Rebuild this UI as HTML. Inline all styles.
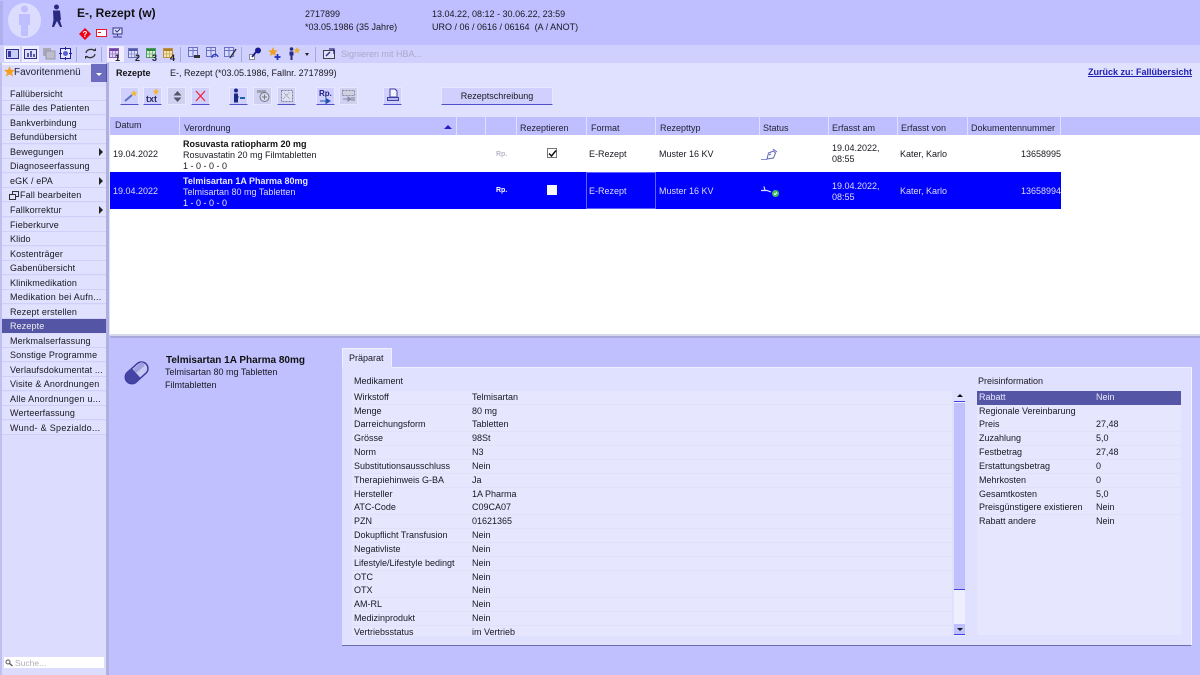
<!DOCTYPE html>
<html><head><meta charset="utf-8"><style>
*{box-sizing:border-box}
html,body{margin:0;padding:0;width:1200px;height:675px;overflow:hidden;background:#c0c0ff;font-family:"Liberation Sans",sans-serif;font-size:9px;color:#181820;}
.a,.t,svg.i{position:absolute}
.t{white-space:nowrap;line-height:12px}
.m{position:absolute;left:2px;width:104px;height:14px;background:#e0e0ff;line-height:14px;padding-left:8px;font-size:9px;letter-spacing:.12px;white-space:nowrap;border-bottom:1px solid #cfcff8}
.ar{position:absolute;right:3px;top:3px;width:0;height:0;border-left:4px solid #222;border-top:4px solid transparent;border-bottom:4px solid transparent}
.btn{position:absolute;top:87px;width:19px;height:18px;background:#d0d0ff;border:1px solid #e8e8ff;border-bottom:1px solid #5050c8}
.btn.d{border-bottom:1px solid #e8e8ff;background:#d0d0f0}
.sep{position:absolute;top:117px;width:1px;height:18px;background:#e0e0ff}
.h{position:absolute;top:122px;line-height:12px;color:#223;white-space:nowrap}
.r{position:absolute;left:352px;width:600px;height:14px;background:#e6e6ff;border-bottom:1px solid #e0e0f8;line-height:15px}
.r span{position:absolute;top:-1px;white-space:nowrap}
.p{position:absolute;left:977px;width:204px;height:14px;background:#e6e6ff;border-bottom:1px solid #e0e0f8;line-height:15px}
.p span{position:absolute;top:-1px;white-space:nowrap}
.ts{position:absolute;top:47px;width:1px;height:15px;background:#a8a8e0}
.tb{position:absolute;top:46px;width:15px;height:15px}
.dg{position:absolute;top:53px;font-size:9px;font-weight:bold;line-height:10px;color:#222}
</style></head><body>

<!-- header -->
<div class="a" style="left:0;top:0;width:1200px;height:45px;background:#bfbfff"></div>
<div class="a" style="left:0;top:1px;width:3px;height:44px;background:#b0b0ef"></div>
<div class="a" style="left:8px;top:3px;width:33px;height:35px;border-radius:50%;background:#dcdcff"></div>
<svg class="i" style="left:8px;top:3px" width="33" height="35"><circle cx="16.500" cy="6" r="3.500" fill="#bfbfff"/><path d="M11 11h11v11h-2v11h-7V22h-2z" fill="#bfbfff"/></svg>
<svg class="i" style="left:50px;top:4px" width="14" height="24"><circle cx="6.500" cy="3" r="2.500" fill="#2a2a80"/><path d="M3 6.500h7l1 9-1 1 2 6.500h-2L7 17l-3 6H2l1.500-7z" fill="#2a2a80"/></svg>
<div class="t" style="left:77px;top:6px;font-size:12px;font-weight:bold;line-height:14px;color:#111;">E-, Rezept (w)</div>
<svg class="i" style="left:79px;top:28px" width="14" height="12"><path d="M6 0l6 6-6 6-6-6z" fill="#f00010"/><text x="6" y="9" font-size="8" font-weight="bold" fill="#fff" text-anchor="middle" font-family="Liberation Sans">?</text></svg>
<svg class="i" style="left:96px;top:29px" width="12" height="10"><rect x=".5" y=".5" width="10" height="7" fill="#fff" stroke="#e81828"/><rect x="2" y="3" width="3" height="1" fill="#e81828"/></svg>
<svg class="i" style="left:112px;top:27px" width="12" height="12"><rect x="1" y="1" width="9" height="6" fill="#e6e6ff" stroke="#30308a"/><path d="M3 3l2 2 3-3" stroke="#30308a" fill="none"/><path d="M5.500 7v2M1 10h9" stroke="#30308a"/></svg>
<div class="t" style="left:305px;top:8px">2717899</div>
<div class="t" style="left:305px;top:21px">*03.05.1986 (35 Jahre)</div>
<div class="t" style="left:432px;top:8px">13.04.22, 08:12 - 30.06.22, 23:59</div>
<div class="t" style="left:432px;top:21px">URO / 06 / 0616 / 06164&nbsp; (A / ANOT)</div>

<!-- toolbar -->
<div class="a" style="left:0;top:45px;width:1200px;height:18px;background:#d0d0ff"></div>
<div class="a" style="left:4px;top:46px;width:16px;height:16px;background:#eeeeff"></div>
<svg class="tb" style="left:5px"><rect x="1.500" y="3.500" width="12" height="9" fill="#c8d0f8" stroke="#303090"/><rect x="3" y="5" width="3" height="6" fill="#3838a0"/></svg>
<div class="a" style="left:22px;top:46px;width:17px;height:16px;background:#eeeeff"></div>
<svg class="tb" style="left:23px"><rect x="1.500" y="3.500" width="12" height="9" fill="#e0e0ff" stroke="#303090"/><path d="M5 7v4M8 5v6M11 8v3" stroke="#303090" stroke-width="1.500"/></svg>
<svg class="tb" style="left:41px"><rect x="2" y="2" width="8" height="8" fill="#a8a8b8"/><rect x="5" y="5" width="9" height="8" fill="#bcbccc" stroke="#9898a8"/></svg>
<svg class="tb" style="left:58px"><rect x="2.500" y="2.500" width="10" height="10" fill="#e8e8ff" stroke="#2020a0"/><circle cx="7.500" cy="7.500" r="2.500" fill="#5860d0"/><path d="M7.500 1v3M7.500 11v3M1 7.500h3M11 7.500h3" stroke="#2020a0"/></svg>
<div class="ts" style="left:76px"></div>
<svg class="tb" style="left:83px"><path d="M3 7a5 4 0 0 1 9-2M12 8a5 4 0 0 1-9 2" fill="none" stroke="#333" stroke-width="1.200"/><path d="M10 5h3V2z M5 10H2v3z" fill="#333"/></svg>
<div class="ts" style="left:101px"></div>
<div class="a" style="left:107px;top:46px;width:17px;height:16px;background:#eeeeff"></div>
<svg class="tb" style="left:109px"><rect x=".5" y="2.500" width="9" height="9" fill="#e0d4f4" stroke="#7040a8" stroke-opacity=".8"/><rect x="1" y="3" width="8" height="2" fill="#7040a8"/><path d="M.5 8h9M3.500 5v6M6.500 5v6" stroke="#7040a8" stroke-opacity=".5"/></svg><div class="dg" style="left:115px">1</div>
<svg class="tb" style="left:128px"><rect x=".5" y="2.500" width="9" height="9" fill="#dcdffa" stroke="#5058a8" stroke-opacity=".8"/><rect x="1" y="3" width="8" height="2" fill="#5058a8"/><path d="M.5 8h9M3.500 5v6M6.500 5v6" stroke="#5058a8" stroke-opacity=".5"/></svg><div class="dg" style="left:135px">2</div>
<svg class="tb" style="left:146px"><rect x=".5" y="2.500" width="9" height="9" fill="#d4eed4" stroke="#308840" stroke-opacity=".8"/><rect x="1" y="3" width="8" height="2" fill="#308840"/><path d="M.5 8h9M3.500 5v6M6.500 5v6" stroke="#308840" stroke-opacity=".5"/></svg><div class="dg" style="left:152px">3</div>
<svg class="tb" style="left:163px"><rect x=".5" y="2.500" width="9" height="9" fill="#f4e4b0" stroke="#b08020" stroke-opacity=".8"/><rect x="1" y="3" width="8" height="2" fill="#b08020"/><path d="M.5 8h9M3.500 5v6M6.500 5v6" stroke="#b08020" stroke-opacity=".5"/></svg><div class="dg" style="left:170px">4</div>
<div class="ts" style="left:180px"></div>
<svg class="tb" style="left:187px"><rect x="1.500" y="1.500" width="9" height="9" fill="#d8dcfc" stroke="#6870c8"/><path d="M1.500 4.500h9M6 1.500v9" stroke="#6870c8"/><rect x="7" y="9" width="6" height="3" fill="#333"/></svg>
<svg class="tb" style="left:205px"><rect x="1.500" y="1.500" width="9" height="9" fill="#d8dcfc" stroke="#6870c8"/><path d="M1.500 4.500h9M6 1.500v9" stroke="#6870c8"/><path d="M7 12a3 3 0 1 1 6-1" fill="none" stroke="#2030c0" stroke-width="1.300"/></svg>
<svg class="tb" style="left:223px"><rect x="1.500" y="1.500" width="9" height="9" fill="#d8dcfc" stroke="#6870c8"/><path d="M1.500 4.500h9M6 1.500v9" stroke="#6870c8"/><path d="M13 3L7 12" stroke="#333" stroke-width="1.500"/></svg>
<div class="ts" style="left:241px"></div>
<svg class="tb" style="left:248px"><rect x="1.500" y="8.500" width="5" height="5" fill="#fff" stroke="#888"/><circle cx="10" cy="4.500" r="3" fill="#1a1a90"/><path d="M8 6L4 11" stroke="#1a1a90" stroke-width="1.800"/></svg>
<svg class="tb" style="left:267px"><path d="M6 1l1.400 3.200 3.400.3-2.600 2.200.8 3.300L6 8.200 3 10l.8-3.300L1.200 4.500l3.400-.3z" fill="#f0a020"/><path d="M10.500 8v6M7.500 11h6" stroke="#2030c0" stroke-width="1.800"/></svg>
<svg class="tb" style="left:287px"><circle cx="4.500" cy="3" r="1.800" fill="#2a2a80"/><path d="M2.500 5.500h4v4h-1v4.500h-2V9.500h-1z" fill="#2a2a80"/><path d="M10 1l1 2.300 2.500.2-1.900 1.600.6 2.400-2.200-1.300-2.200 1.300.6-2.400L6.500 3.500 9 3.300z" fill="#e8b030"/></svg>
<div class="a" style="left:305px;top:53px;width:0;height:0;border-left:2.500px solid transparent;border-right:2.500px solid transparent;border-top:3px solid #222"></div>
<div class="ts" style="left:315px"></div>
<svg class="tb" style="left:322px"><rect x="1.500" y="4.500" width="11" height="8" fill="#e0e0ff" stroke="#444"/><path d="M4 10l4-4M7 3h5v5" fill="none" stroke="#2a2a80" stroke-width="1.300"/></svg>
<div class="t" style="left:341px;top:48px;color:#a8a8c8;">Signieren mit HBA...</div>

<!-- sidebar -->
<div class="a" style="left:0;top:63px;width:108px;height:612px;background:#dcdcff"></div>
<div class="a" style="left:0;top:63px;width:2px;height:612px;background:#c0c0f0"></div>
<div class="a" style="left:106px;top:63px;width:3px;height:612px;background:#b0b0e0"></div>
<div class="a" style="left:109px;top:63px;width:1px;height:272px;background:#e0e0ff"></div>
<div class="a" style="left:2px;top:63px;width:89px;height:2px;background:#f4f4ff"></div>
<svg class="i" style="left:4px;top:66px" width="11" height="11"><path d="M5.500 0l1.500 3.700 4 .3-3 2.600 1 3.900-3.500-2.100L2 10.500l1-3.900L0 4l4-.3z" fill="#f5a020"/></svg>
<div class="t" style="left:14px;top:67px;font-size:10px;color:#223;">Favoritenmenü</div>
<div class="a" style="left:91px;top:64px;width:16px;height:18px;background:#6c6cc0;border-right:1px solid #5050a8"></div>
<div class="a" style="left:96px;top:73px;width:0;height:0;border-left:3px solid transparent;border-right:3px solid transparent;border-top:3px solid #fff"></div>

<div class="m" style="top:87px">Fallübersicht</div>
<div class="m" style="top:101px">Fälle des Patienten</div>
<div class="m" style="top:116px">Bankverbindung</div>
<div class="m" style="top:130px">Befundübersicht</div>
<div class="m" style="top:145px">Bewegungen<i class="ar"></i></div>
<div class="m" style="top:159px">Diagnoseerfassung</div>
<div class="m" style="top:174px">eGK / ePA<i class="ar"></i></div>
<div class="m" style="top:188px;padding-left:18px">Fall bearbeiten<svg class="i" style="left:7px;top:3px" width="10" height="9"><rect x="3.500" y=".5" width="6" height="5" fill="none" stroke="#333"/><rect x=".5" y="3.500" width="6" height="5" fill="#e0e0ff" stroke="#333"/></svg></div>
<div class="m" style="top:203px">Fallkorrektur<i class="ar"></i></div>
<div class="m" style="top:218px">Fieberkurve</div>
<div class="m" style="top:232px">Klido</div>
<div class="m" style="top:247px">Kostenträger</div>
<div class="m" style="top:261px">Gabenübersicht</div>
<div class="m" style="top:276px">Klinikmedikation</div>
<div class="m" style="top:290px;letter-spacing:.25px">Medikation bei Aufn...</div>
<div class="m" style="top:305px">Rezept erstellen</div>
<div class="m" style="top:319px;background:#5555a5;color:#eee;border-bottom:0">Rezepte</div>
<div class="m" style="top:334px">Merkmalserfassung</div>
<div class="m" style="top:348px;letter-spacing:.15px">Sonstige Programme</div>
<div class="m" style="top:363px;letter-spacing:.15px">Verlaufsdokumentat ...</div>
<div class="m" style="top:377px;letter-spacing:.15px">Visite &amp; Anordnungen</div>
<div class="m" style="top:392px;letter-spacing:.23px">Alle Anordnungen u...</div>
<div class="m" style="top:406px">Werteerfassung</div>
<div class="m" style="top:421px;letter-spacing:.3px">Wund- &amp; Spezialdo...</div>
<div class="a" style="left:4px;top:657px;width:100px;height:11px;background:#fff"></div>
<svg class="i" style="left:5px;top:659px" width="9" height="8"><circle cx="3" cy="3" r="2" fill="none" stroke="#555"/><path d="M4.500 4.500l3 2.500" stroke="#555" stroke-width="1.300"/></svg>
<div class="t" style="left:15px;top:657px;font-size:8.500px;line-height:12px;color:#b0b0b8;">Suche...</div>

<!-- content top -->
<div class="a" style="left:110px;top:63px;width:1090px;height:54px;background:#e0e0ff"></div>
<div class="t" style="left:116px;top:67px;font-weight:bold;color:#111;">Rezepte</div>
<div class="t" style="left:170px;top:67px">E-, Rezept (*03.05.1986, Fallnr. 2717899)</div>
<div class="t" style="left:1088px;top:66px;font-weight:bold;color:#2020b0;text-decoration:underline;">Zurück zu: Fallübersicht</div>

<div class="btn" style="left:120px"><svg class="i" style="left:1px;top:0" width="16" height="15"><path d="M3 13L10 7" stroke="#6070c0" stroke-width="2"/><path d="M12 2l1 2.300 2.300.2-1.700 1.500.5 2.300-2.100-1.200-2 1.200.5-2.300L8.700 4.500 11 4.300z" fill="#f0b830"/></svg></div>
<div class="btn" style="left:143px"><div class="t" style="left:2px;top:5px;font-size:9px;font-weight:bold;color:#2a2a60;">txt</div><svg class="i" style="left:8px;top:0" width="9" height="8"><path d="M4 0l1 2.500 2.500.2-2 1.600.6 2.500L4 5.500 1.900 6.800l.6-2.500-2-1.600 2.500-.2z" fill="#f0b830"/></svg></div>
<div class="btn d" style="left:167px"><svg class="i" style="left:3px;top:2px" width="13" height="14"><path d="M6.500 1l4 4.500h-8zM6.500 12l4-4.500h-8z" fill="#555568"/></svg></div>
<div class="btn" style="left:191px"><svg class="i" style="left:2px;top:1px" width="13" height="14"><path d="M2 2l9 10M11 2L2 12" stroke="#f02830" stroke-width="1.300"/></svg></div>
<div class="btn" style="left:229px"><svg class="i" style="left:2px;top:0" width="15" height="16"><circle cx="4" cy="2.500" r="2" fill="#1a2880"/><path d="M2 5.500h4v3h1v1H6v5H2z" fill="#1a2880"/><path d="M8 9h5v2H8z" fill="#2060b0"/></svg></div>
<div class="btn d" style="left:253px"><svg class="i" style="left:1px;top:0" width="16" height="16"><rect x="2" y="2" width="9" height="3" fill="#a0a0b0"/><circle cx="9.500" cy="9" r="4.500" fill="#d8d8ee" stroke="#777788"/><path d="M9.500 6.500v5M7 9h5" stroke="#777788"/></svg></div>
<div class="btn" style="left:277px;background:#d0d0f0"><svg class="i" style="left:2px;top:1px" width="14" height="14"><rect x="1.500" y="1.500" width="11" height="11" fill="#e0e0f0" stroke="#8080a8" stroke-dasharray="2 1"/><path d="M3 10l7-7M4 4l6 6" stroke="#9090b0" stroke-dasharray="1 1"/></svg></div>
<div class="btn" style="left:316px"><div class="t" style="left:2px;top:1px;font-size:8px;font-weight:bold;line-height:10px;color:#1a1a80;">Rp.</div><svg class="i" style="left:3px;top:10px" width="13" height="7"><path d="M0 3h8M6 0.500l4 2.500-4 2.500z" fill="#2050b0" stroke="#2050b0"/></svg></div>
<div class="btn d" style="left:339px"><svg class="i" style="left:1px;top:1px" width="15" height="14"><rect x="1.500" y="1.500" width="12" height="5" fill="#d0d0e0" stroke="#8888a0" stroke-dasharray="2 1"/><path d="M2 10h7M7 8l3 2-3 2z" stroke="#8888a0" fill="#8888a0"/><rect x="10" y="8" width="4" height="4" fill="#a8a8b8"/></svg></div>
<div class="btn" style="left:383px"><svg class="i" style="left:2px;top:0" width="14" height="16"><path d="M4 1h5l2 2v6H4z" fill="#f4f4ff" stroke="#4040a0"/><path d="M1.500 9.500h11v3h-11z" fill="#b8b8f0" stroke="#4040a0"/></svg></div>
<div class="a" style="left:441px;top:87px;width:112px;height:18px;background:#d0d0ff;border:1px solid #e8e8ff;border-bottom:1px solid #5050c8;text-align:center;line-height:17px;">Rezeptschreibung</div>

<!-- table -->
<div class="a" style="left:110px;top:117px;width:1090px;height:18px;background:#bfbfff"></div>
<div class="a" style="left:110px;top:135px;width:1090px;height:199px;background:#fff"></div>
<div class="sep" style="left:179px"></div><div class="sep" style="left:456px"></div><div class="sep" style="left:485px"></div><div class="sep" style="left:516px"></div><div class="sep" style="left:586px"></div><div class="sep" style="left:655px"></div><div class="sep" style="left:759px"></div><div class="sep" style="left:828px"></div><div class="sep" style="left:897px"></div><div class="sep" style="left:967px"></div><div class="sep" style="left:1060px"></div>
<div class="h" style="left:115px;top:119px">Datum</div>
<div class="h" style="left:184px">Verordnung</div>
<div class="a" style="left:444px;top:125px;width:0;height:0;border-left:4px solid transparent;border-right:4px solid transparent;border-bottom:4px solid #2020c0"></div>
<div class="h" style="left:520px">Rezeptieren</div>
<div class="h" style="left:591px">Format</div>
<div class="h" style="left:660px">Rezepttyp</div>
<div class="h" style="left:763px">Status</div>
<div class="h" style="left:832px">Erfasst am</div>
<div class="h" style="left:901px">Erfasst von</div>
<div class="h" style="left:971px">Dokumentennummer</div>

<!-- row1 -->
<div class="t" style="left:113px;top:148px">19.04.2022</div>
<div class="t" style="left:183px;top:138px;font-weight:bold;color:#111;">Rosuvasta ratiopharm 20 mg</div>
<div class="t" style="left:183px;top:149px">Rosuvastatin 20 mg Filmtabletten</div>
<div class="t" style="left:183px;top:160px">1 - 0 - 0 - 0</div>
<div class="t" style="left:496px;top:149px;font-size:7px;font-weight:bold;color:#b8b8c8;">Rp.</div>
<div class="a" style="left:547px;top:148px;width:10px;height:10px;background:#fff;border:1px solid #777;"></div>
<svg class="i" style="left:547px;top:148px" width="11" height="11"><path d="M2 5.500L4.500 8 9 2.500" fill="none" stroke="#111" stroke-width="1.500"/></svg>
<div class="t" style="left:589px;top:148px">E-Rezept</div>
<div class="t" style="left:659px;top:148px">Muster 16 KV</div>
<svg class="i" style="left:760px;top:147px" width="19" height="15"><path d="M1 12.500h6" stroke="#8890d0"/><path d="M7 12l1.500-6 5-2 2 2-2 5z" fill="none" stroke="#6068b8"/><path d="M13 2l4 3M9 8l2-1" stroke="#6068b8"/></svg>
<div class="t" style="left:832px;top:142px">19.04.2022,</div>
<div class="t" style="left:832px;top:153px">08:55</div>
<div class="t" style="left:900px;top:148px">Kater, Karlo</div>
<div class="t" style="left:1021px;top:148px">13658995</div>

<!-- row2 -->
<div class="a" style="left:110px;top:172px;width:951px;height:37px;background:#0000ff"></div>
<div class="a" style="left:586px;top:172px;width:70px;height:37px;border:1px solid #6060ff"></div>
<div class="t" style="left:113px;top:185px;color:#dde">19.04.2022</div>
<div class="t" style="left:183px;top:175px;font-weight:bold;color:#e8e8ff;">Telmisartan 1A Pharma 80mg</div>
<div class="t" style="left:183px;top:186px;color:#dde">Telmisartan 80 mg Tabletten</div>
<div class="t" style="left:183px;top:197px;color:#e8e8ff">1 - 0 - 0 - 0</div>
<div class="t" style="left:496px;top:185px;font-size:7px;font-weight:bold;color:#fff;">Rp.</div>
<div class="a" style="left:547px;top:185px;width:10px;height:10px;background:#f8f8f8;"></div>
<div class="t" style="left:589px;top:185px;color:#dde">E-Rezept</div>
<div class="t" style="left:659px;top:185px;color:#dde">Muster 16 KV</div>
<svg class="i" style="left:760px;top:183px" width="20" height="15"><path d="M1 7.500h6l4 1.500M4 3.500l1 4" stroke="#e0e0ff" fill="none" stroke-width="1.200"/><circle cx="15.500" cy="10.500" r="3.500" fill="#40c060"/><path d="M14 10.500l1 1 2-2" stroke="#fff" fill="none"/></svg>
<div class="t" style="left:832px;top:180px;color:#dde">19.04.2022,</div>
<div class="t" style="left:832px;top:191px;color:#dde">08:55</div>
<div class="t" style="left:900px;top:185px;color:#dde">Kater, Karlo</div>
<div class="t" style="left:1021px;top:185px;color:#dde">13658994</div>

<!-- splitter -->
<div class="a" style="left:110px;top:334px;width:1090px;height:2px;background:#d8d8ec"></div>
<div class="a" style="left:110px;top:336px;width:1090px;height:2px;background:#a8a8dc"></div>

<!-- detail head -->
<svg class="i" style="left:122px;top:358px" width="30" height="29"><g transform="rotate(-42 15 14.500)"><rect x="1.500" y="8" width="26" height="13" rx="6.500" fill="#c8c8f4" stroke="#3c3ca0" stroke-width="1.500"/><path d="M14 8.500H8a6 6 0 0 0 0 12h6z" fill="#4444a4"/><rect x="14" y="9.500" width="12" height="5" rx="2" fill="#a0a0e0"/></g></svg>
<div class="t" style="left:166px;top:355px;font-weight:bold;font-size:10px;color:#111;">Telmisartan 1A Pharma 80mg</div>
<div class="t" style="left:165px;top:366px">Telmisartan 80 mg Tabletten</div>
<div class="t" style="left:165px;top:379px">Filmtabletten</div>

<!-- panel -->
<div class="a" style="left:342px;top:348px;width:50px;height:20px;background:#e0e0ff;border-top:1px solid #f0f0ff;border-left:1px solid #f0f0ff;border-right:1px solid #f0f0ff"></div>
<div class="t" style="left:349px;top:352px">Präparat</div>
<div class="a" style="left:342px;top:367px;width:850px;height:279px;background:#e0e0ff;border-right:1px solid #f4f4ff;border-bottom:1px solid #6c6cb0"></div>
<div class="a" style="left:392px;top:367px;width:800px;height:1px;background:#f0f0ff"></div>
<div class="t" style="left:354px;top:375px">Medikament</div>

<div class="r" style="top:391px"><span style="left:2px">Wirkstoff</span><span style="left:120px">Telmisartan</span></div>
<div class="r" style="top:405px"><span style="left:2px">Menge</span><span style="left:120px">80 mg</span></div>
<div class="r" style="top:418px"><span style="left:2px">Darreichungsform</span><span style="left:120px">Tabletten</span></div>
<div class="r" style="top:432px"><span style="left:2px">Grösse</span><span style="left:120px">98St</span></div>
<div class="r" style="top:446px"><span style="left:2px">Norm</span><span style="left:120px">N3</span></div>
<div class="r" style="top:460px"><span style="left:2px">Substitutionsausschluss</span><span style="left:120px">Nein</span></div>
<div class="r" style="top:474px"><span style="left:2px">Therapiehinweis G-BA</span><span style="left:120px">Ja</span></div>
<div class="r" style="top:488px"><span style="left:2px">Hersteller</span><span style="left:120px">1A Pharma</span></div>
<div class="r" style="top:501px"><span style="left:2px">ATC-Code</span><span style="left:120px">C09CA07</span></div>
<div class="r" style="top:515px"><span style="left:2px">PZN</span><span style="left:120px">01621365</span></div>
<div class="r" style="top:529px"><span style="left:2px">Dokupflicht Transfusion</span><span style="left:120px">Nein</span></div>
<div class="r" style="top:543px"><span style="left:2px">Negativliste</span><span style="left:120px">Nein</span></div>
<div class="r" style="top:557px"><span style="left:2px">Lifestyle/Lifestyle bedingt</span><span style="left:120px">Nein</span></div>
<div class="r" style="top:571px"><span style="left:2px">OTC</span><span style="left:120px">Nein</span></div>
<div class="r" style="top:584px"><span style="left:2px">OTX</span><span style="left:120px">Nein</span></div>
<div class="r" style="top:598px"><span style="left:2px">AM-RL</span><span style="left:120px">Nein</span></div>
<div class="r" style="top:612px"><span style="left:2px">Medizinprodukt</span><span style="left:120px">Nein</span></div>
<div class="r" style="top:626px;height:10px;overflow:visible;border-bottom:0"><span style="left:2px">Vertriebsstatus</span><span style="left:120px">im Vertrieb</span></div>

<!-- scrollbar -->
<div class="a" style="left:954px;top:391px;width:11px;height:245px;background:#eeeeff"></div>
<div class="a" style="left:954px;top:391px;width:11px;height:11px;background:#e0e0ff;border-bottom:1px solid #4040e0"></div>
<div class="a" style="left:957px;top:394px;width:0;height:0;border-left:3px solid transparent;border-right:3px solid transparent;border-bottom:3px solid #111"></div>
<div class="a" style="left:954px;top:403px;width:11px;height:187px;background:#c0c0ff;border-bottom:1px solid #4040e0"></div>
<div class="a" style="left:954px;top:624px;width:11px;height:11px;background:#c0c0ff;border-bottom:1px solid #4040e0"></div>
<div class="a" style="left:957px;top:628px;width:0;height:0;border-left:3px solid transparent;border-right:3px solid transparent;border-top:3px solid #111"></div>

<!-- price -->
<div class="t" style="left:978px;top:375px">Preisinformation</div>
<div class="a" style="left:977px;top:391px;width:204px;height:244px;background:#e6e6ff"></div>
<div class="p" style="top:391px;background:#5555a5;color:#e8e8ff;border-bottom:0"><span style="left:2px">Rabatt</span><span style="left:119px">Nein</span></div>
<div class="p" style="top:405px"><span style="left:2px">Regionale Vereinbarung</span></div>
<div class="p" style="top:418px"><span style="left:2px">Preis</span><span style="left:119px">27,48</span></div>
<div class="p" style="top:432px"><span style="left:2px">Zuzahlung</span><span style="left:119px">5,0</span></div>
<div class="p" style="top:446px"><span style="left:2px">Festbetrag</span><span style="left:119px">27,48</span></div>
<div class="p" style="top:460px"><span style="left:2px">Erstattungsbetrag</span><span style="left:119px">0</span></div>
<div class="p" style="top:474px"><span style="left:2px">Mehrkosten</span><span style="left:119px">0</span></div>
<div class="p" style="top:488px"><span style="left:2px">Gesamtkosten</span><span style="left:119px">5,0</span></div>
<div class="p" style="top:501px"><span style="left:2px">Preisgünstigere existieren</span><span style="left:119px">Nein</span></div>
<div class="p" style="top:515px;border-bottom:0"><span style="left:2px">Rabatt andere</span><span style="left:119px">Nein</span></div>

</body></html>
